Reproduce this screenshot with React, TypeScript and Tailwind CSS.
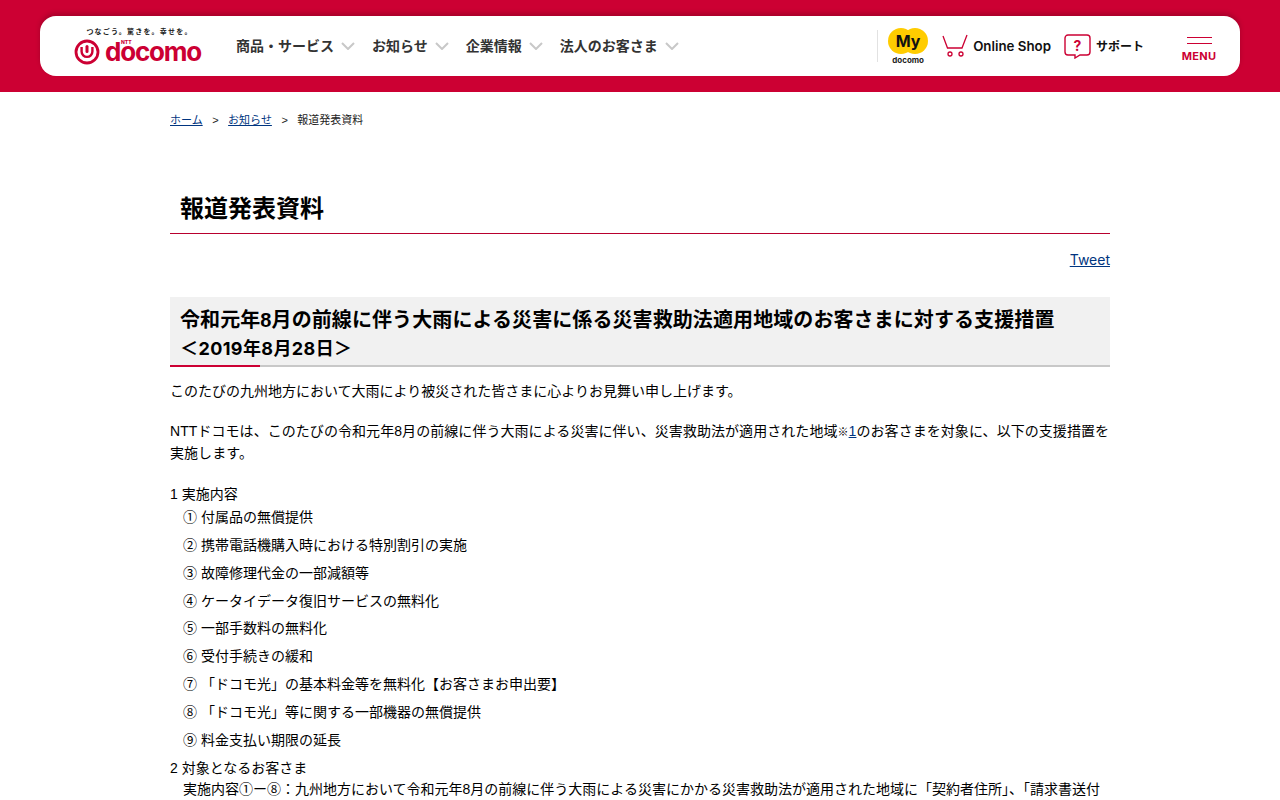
import React from 'react';

const navItems = ['商品・サービス', 'お知らせ', '企業情報', '法人のお客さま'];

const contents = [
  '① 付属品の無償提供',
  '② 携帯電話機購入時における特別割引の実施',
  '③ 故障修理代金の一部減額等',
  '④ ケータイデータ復旧サービスの無料化',
  '⑤ 一部手数料の無料化',
  '⑥ 受付手続きの緩和',
  '⑦ 「ドコモ光」の基本料金等を無料化【お客さまお申出要】',
  '⑧ 「ドコモ光」等に関する一部機器の無償提供',
  '⑨ 料金支払い期限の延長',
];

const Chevron = () => (
  <svg width="14" height="8" viewBox="0 0 14 8" fill="none" stroke="#c8c8c8" strokeWidth="2">
    <path d="M1 1l6 6 6-6" />
  </svg>
);

const Logo = () => (
  <div className="flex w-[127px] flex-col items-center">
    <span className="ml-[4px] text-[7px] font-bold leading-[10px] tracking-[1.2px] text-[#222]">つなごう。驚きを。幸せを。</span>
    <div className="relative mt-[2px] flex h-[26px] items-center gap-[5px]">
      <svg width="26" height="26" viewBox="0 0 26 26" fill="none" stroke="#cc0033">
        <circle cx="13" cy="13" r="11" strokeWidth="2.8" />
        <path d="M7.6 8v4.5a5.4 5.4 0 0 0 10.8 0V8" strokeWidth="2.4" />
        <path d="M13 7.5v5" strokeWidth="3" strokeLinecap="round" />
      </svg>
      <span className="font-['Inter',sans-serif] text-[26px] font-bold leading-[26px] tracking-[-1.2px] text-[#cc0033]">docomo</span>
      <span className="absolute left-[47px] top-0 font-['Inter',sans-serif] text-[5px] font-extrabold leading-[6px] text-[#cc0033]">NTT</span>
    </div>
  </div>
);

const Header = () => (
  <header className="h-[92px] bg-[#cc0033] px-10 pt-4">
    <div className="flex h-[60px] items-center rounded-2xl bg-white pl-[34px] shadow-[0_-3px_5px_rgba(0,0,0,0.18)]">
      <Logo />
      <nav className="ml-[35px] flex items-center">
        {navItems.map((item) => (
          <div key={item} className="mr-[17px] flex items-center gap-[7px] text-sm font-bold text-[#333]">
            {item}
            <Chevron />
          </div>
        ))}
      </nav>
      <div className="ml-auto flex h-full items-center">
        <div className="mr-[9px] h-8 w-px bg-[#e2e2e2]" />
        <div className="mr-[13px] flex w-[42px] flex-col items-center">
          <svg width="40" height="26" viewBox="0 0 40 26">
            <circle cx="13" cy="13" r="13" fill="#ffcc00" />
            <circle cx="27" cy="13" r="13" fill="#ffcc00" />
            <text x="20" y="18.5" textAnchor="middle" fontSize="16" fontWeight="700" fill="#111" fontFamily="Inter, sans-serif">My</text>
          </svg>
          <span className="mt-[1px] font-['Inter',sans-serif] text-[8px] font-bold leading-[10px] text-[#222]">docomo</span>
        </div>
        <svg width="26" height="24" viewBox="0 0 26 24" fill="none" stroke="#cc0033" strokeWidth="1.3" className="mr-[5px]">
          <path d="M1 2l4.5 12h14.5L25 1" />
          <circle cx="8" cy="20" r="2" />
          <circle cx="19" cy="20" r="2" />
        </svg>
        <span className="mr-[13px] mt-[2px] font-['Inter',sans-serif] text-[13.3px] font-semibold text-[#111]">Online Shop</span>
        <svg width="27" height="25" viewBox="0 0 27 25" fill="none" className="mr-[5px]">
          <path d="M4 1h19a3 3 0 0 1 3 3v14a3 3 0 0 1-3 3h-7l-5 3v-3H4a3 3 0 0 1-3-3V4a3 3 0 0 1 3-3z" stroke="#cc0033" strokeWidth="1.4" />
          <text x="13.5" y="16.5" textAnchor="middle" fontSize="14" fontWeight="700" fill="#cc0033" fontFamily="Inter, sans-serif">?</text>
        </svg>
        <span className="mt-[1px] text-xs font-bold text-[#111]">サポート</span>
        <div className="ml-[38px] mr-[24px] mt-[7px] flex w-[34px] flex-col items-center">
          <div className="h-[7px] w-[25px] border-y border-[#cc0033]" />
          <span className="mt-[6px] font-['Inter',sans-serif] text-[11px] font-bold leading-[13px] tracking-[0.3px] text-[#cc0033]">MENU</span>
        </div>
      </div>
    </div>
  </header>
);

const Breadcrumb = () => (
  <div className="flex h-[57px] items-center text-[11px] text-[#222]">
    <a className="text-[#003580] underline">ホーム</a>
    <span className="mx-[9.5px]">&gt;</span>
    <a className="text-[#003580] underline">お知らせ</a>
    <span className="mx-[9.5px]">&gt;</span>
    <span>報道発表資料</span>
  </div>
);

export default function App() {
  return (
    <div className="h-[800px] overflow-hidden bg-white font-['Liberation_Sans','Noto_Sans_CJK_JP',sans-serif] text-black">
      <Header />
      <main className="mx-auto w-[940px]">
        <Breadcrumb />
        <h1 className="mt-10 border-b border-[#b8002e] pb-[4px] pl-[10px] text-2xl font-bold leading-[40px]">報道発表資料</h1>
        <div className="mt-[15px] text-right text-sm leading-[22px]">
          <a className="font-['Inter',sans-serif] text-[#003580] underline">Tweet</a>
        </div>
        <h2 className="relative mt-[26px] h-[70px] border-b-2 border-[#c8c8c8] bg-[#f1f1f1] px-[10px] pt-[9px] text-[20px] font-bold leading-[28px]">
          <span className="tracking-[0.09px]">令和元年8月の前線に伴う大雨による災害に係る災害救助法適用地域のお客さまに対する支援措置</span>
          <br />
          <span className="font-['Inter','Noto_Sans_CJK_JP',sans-serif] text-lg tracking-[0.4px]">＜2019年8月28日＞</span>
          <span className="absolute bottom-[-2px] left-0 h-[2px] w-[90px] bg-[#cc0033]" />
        </h2>
        <div className="text-sm leading-[22px]">
          <p className="mt-[13px]">このたびの九州地方において大雨により被災された皆さまに心よりお見舞い申し上げます。</p>
          <p className="mt-[19px] leading-[21px] tracking-[0.06px]">
            NTTドコモは、このたびの令和元年8月の前線に伴う大雨による災害に伴い、災害救助法が適用された地域<span className="text-[11px]">※</span>
            <a className="text-[#003580] underline">1</a>のお客さまを対象に、以下の支援措置を実施します。
          </p>
          <p className="mt-[19px]">1 実施内容</p>
          <ul className="mb-[1px] mt-[1px] pl-[13px]">
            {contents.map((line) => (
              <li key={line} className="mb-[5.85px]">{line}</li>
            ))}
          </ul>
          <p>2 対象となるお客さま</p>
          <p className="mt-[-1px] pl-[13px]">実施内容①ー⑧：九州地方において令和元年8月の前線に伴う大雨による災害にかかる災害救助法が適用された地域に「契約者住所」、「請求書送付</p>
        </div>
      </main>
    </div>
  );
}
